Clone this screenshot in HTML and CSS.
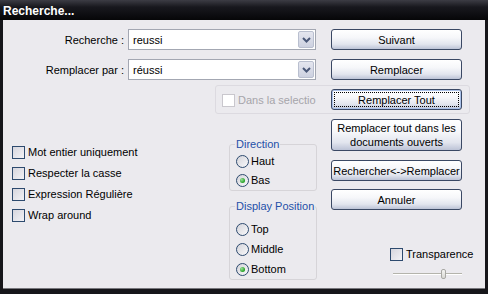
FILE: index.html
```html
<!DOCTYPE html>
<html lang="fr">
<head>
    <meta charset="UTF-8">
    <title>Recherche...</title>
    <link rel="stylesheet" href="styles.css">
</head>
<body>

<div class="window">
    <div class="titlebar">Recherche...</div>
    <div class="client">

        <div class="field-row">
            <label class="field-label">Recherche :</label>
            <div class="combo">
                <span class="combo-text">reussi</span>
                <span class="combo-btn"><svg width="9" height="6" viewBox="0 0 9 6"><path d="M1 1 L4.5 4.5 L8 1" fill="none" stroke="#4a5878" stroke-width="2"/></svg></span>
            </div>
            <button class="btn">Suivant</button>
        </div>

        <div class="field-row">
            <label class="field-label">Remplacer par :</label>
            <div class="combo">
                <span class="combo-text">réussi</span>
                <span class="combo-btn"><svg width="9" height="6" viewBox="0 0 9 6"><path d="M1 1 L4.5 4.5 L8 1" fill="none" stroke="#4a5878" stroke-width="2"/></svg></span>
            </div>
            <button class="btn">Remplacer</button>
        </div>

        <div class="scope-group">
            <label class="check check-disabled"><span class="box"></span>Dans la selectio</label>
            <button class="btn btn-focus">Remplacer Tout</button>
        </div>

        <div class="lower">
            <div class="options">
                <label class="check"><span class="box"></span>Mot entier uniquement</label>
                <label class="check"><span class="box"></span>Respecter la casse</label>
                <label class="check"><span class="box"></span>Expression Régulière</label>
                <label class="check check-last"><span class="box"></span>Wrap around</label>
            </div>

            <div class="groups">
                <fieldset class="group group-direction">
                    <legend>Direction</legend>
                    <label class="radio"><span class="dot"></span>Haut</label>
                    <label class="radio radio-on"><span class="dot"></span>Bas</label>
                </fieldset>
                <fieldset class="group group-position">
                    <legend>Display Position</legend>
                    <label class="radio"><span class="dot"></span>Top</label>
                    <label class="radio"><span class="dot"></span>Middle</label>
                    <label class="radio radio-on"><span class="dot"></span>Bottom</label>
                </fieldset>
            </div>

            <div class="actions">
                <button class="btn btn-tall">Remplacer tout dans les<br>documents ouverts</button>
                <button class="btn btn-swap">Rechercher&lt;-&gt;Remplacer</button>
                <button class="btn btn-cancel">Annuler</button>
                <label class="check check-transp"><span class="box"></span>Transparence</label>
                <div class="slider"><span class="slider-thumb"></span></div>
            </div>
        </div>

    </div>
</div>

</body>
</html>
```

FILE: styles.css
```css
body {
    margin: 0;
    font-family: "Liberation Sans", Arial, sans-serif;
    font-size: 11px;
    color: #000;
    background: #000;
}
.window {
    width: 488px;
    height: 294px;
    display: flex;
    flex-direction: column;
    background: #16161a;
}
.titlebar {
    height: 17px;
    padding: 3px 0 0 3px;
    line-height: 17px;
    font-size: 12px;
    font-weight: bold;
    color: #fff;
    background: linear-gradient(#3c3c44, #18181e 35%, #060608);
}
.client {
    flex: 1;
    margin: 0 3px 6px 3px;
    padding-top: 9px;
    background: #ebeaee;
    box-shadow: 0 1px 0 #77777c;
}

/* lignes recherche / remplacer */
.field-row {
    display: flex;
    align-items: center;
    height: 21px;
    margin-bottom: 9px;
}
.field-label {
    width: 121px;
    margin-right: 4px;
    text-align: right;
}
.combo {
    width: 188px;
    height: 21px;
    box-sizing: border-box;
    display: flex;
    align-items: center;
    border: 1px solid #a3a7b2;
    background: #fff;
}
.combo-text {
    flex: 1;
    padding-left: 4px;
}
.combo-btn {
    width: 16px;
    height: 17px;
    margin-right: 1px;
    box-sizing: border-box;
    display: flex;
    align-items: center;
    justify-content: center;
    border: 1px solid #b9bfcf;
    border-radius: 2px;
    background: linear-gradient(#e4e6ef, #cdd1e0);
}

/* boutons */
.btn {
    width: 131px;
    height: 21px;
    margin-left: 15px;
    padding: 0;
    box-sizing: border-box;
    font-family: inherit;
    font-size: 11px;
    color: #000;
    white-space: nowrap;
    border: 1px solid #3a4864;
    border-radius: 3px;
    background: linear-gradient(#ffffff, #f6f7fa 40%, #e2e5ee 75%, #bcc3d6);
}
.btn-focus {
    margin-left: 0;
    box-shadow: inset 0 0 0 1px #a9c0e8;
    outline: 1px dotted #000;
    outline-offset: -4px;
}
.actions .btn {
    margin-left: 0;
}
.btn-tall {
    height: 32px;
    line-height: 14px;
}
.btn-swap {
    margin-top: 9px;
}
.btn-cancel {
    margin-top: 8px;
}

/* groupe "Dans la selectio" */
.scope-group {
    width: 255px;
    height: 29px;
    margin: -4px 0 0 212px;
    padding-left: 6px;
    box-sizing: border-box;
    display: flex;
    align-items: center;
    border: 1px solid #dcdae0;
    border-radius: 3px;
}
.scope-group .check {
    width: 109px;
    margin-top: 1px;
}

/* cases et radios */
.check, .radio {
    display: flex;
    align-items: center;
    height: 13px;
    line-height: 13px;
    white-space: nowrap;
}
.box {
    flex-shrink: 0;
    width: 13px;
    height: 13px;
    margin-right: 3px;
    box-sizing: border-box;
    border: 1px solid #2d4a6e;
    background: linear-gradient(135deg, #d6d6de, #f2f2f6);
}
.check-disabled {
    color: #a6a5aa;
}
.check-disabled .box {
    border-color: #c9c7cd;
    background: #fff;
}
.dot {
    flex-shrink: 0;
    width: 13px;
    height: 13px;
    margin-right: 2px;
    box-sizing: border-box;
    display: flex;
    align-items: center;
    justify-content: center;
    border: 1px solid #2d4a6e;
    border-radius: 50%;
    background: linear-gradient(135deg, #d4d4da, #f8f8fa);
}
.radio-on .dot::after {
    content: "";
    width: 5px;
    height: 5px;
    border-radius: 50%;
    background: radial-gradient(circle at 35% 35%, #9be09b, #22a022 70%);
}

/* partie basse */
.lower {
    display: flex;
    margin-top: 5px;
}
.options {
    width: 217px;
    padding: 27px 0 0 9px;
}
.options .check {
    margin-bottom: 8px;
}
.options .check-last {
    margin-top: 5px;
}
.groups {
    width: 88px;
    margin-right: 14px;
    padding-top: 19px;
}
.group {
    margin: 0;
    padding: 4px 6px 3px 6px;
    min-width: 0;
    border: 1px solid #d6d4d8;
    border-radius: 3px;
}
.group legend {
    padding: 0 1px;
    margin-left: -1px;
    line-height: 13px;
    white-space: nowrap;
    color: #2450a8;
}
.group .radio {
    margin-bottom: 6px;
}
.group .radio:last-child {
    margin-bottom: 0;
}
.group-position {
    margin-top: 9px;
    padding-top: 10px;
}
.group-position .radio {
    margin-bottom: 7px;
}
.actions {
    width: 131px;
    display: flex;
    flex-direction: column;
}
.check-transp {
    margin: 38px 0 0 59px;
}
.slider {
    width: 69px;
    height: 10px;
    margin: 8px 0 0 62px;
    display: flex;
    background: linear-gradient(transparent 4px, #b4b4ac 4px, #b4b4ac 5px, #fff 5px, #fff 6px, transparent 6px);
}
.slider-thumb {
    width: 5px;
    height: 10px;
    margin-left: 48px;
    box-sizing: border-box;
    border: 1px solid #a8a8a4;
    border-radius: 2px;
    background: linear-gradient(#f4f4f2, #d8d8d4);
}
```
